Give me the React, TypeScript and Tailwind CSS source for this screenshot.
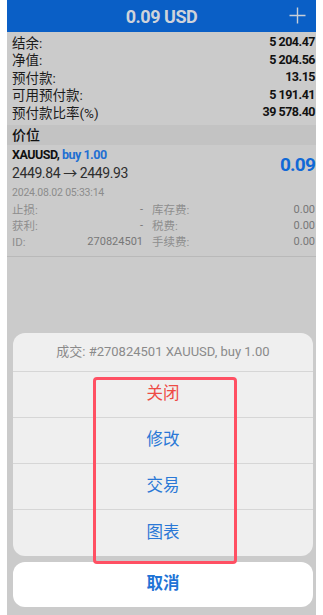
import React from 'react';

const cjk = { fontFamily: 'Roboto, "Noto Sans CJK SC", sans-serif' };

const balances = [
    ['结余:', '5 204.47'],
    ['净值:', '5 204.56'],
    ['预付款:', '13.15'],
    ['可用预付款:', '5 191.41'],
    ['预付款比率(%)', '39 578.40'],
];

const details = [
    ['止损:', '-', '库存费:', '0.00'],
    ['获利:', '-', '税费:', '0.00'],
    ['ID:', '270824501', '手续费:', '0.00'],
];

const actions = [
    { label: '关闭', color: 'text-[#ee4b45]' },
    { label: '修改', color: 'text-[#2a78d6]' },
    { label: '交易', color: 'text-[#2a78d6]' },
    { label: '图表', color: 'text-[#2a78d6]' },
];

const App: React.FC = () => {
    return (
        <div className="w-[323px] h-[615px] bg-white flex" style={cjk}>
            <div className="ml-[7px] w-[309px] h-full bg-[#cbcbcb] relative overflow-hidden">
                {/* header */}
                <div className="h-[32px] bg-[#0a5fc6] flex items-center justify-center relative">
                    <span className="text-[18px] font-bold text-[#cfd3da] tracking-tight">0.09 USD</span>
                    <svg className="absolute right-[10px] top-[7px]" width="17" height="17" viewBox="0 0 17 17">
                        <path d="M8.5 0.5v16M0.5 8.5h16" stroke="#c9cfd8" strokeWidth="1.4" />
                    </svg>
                </div>

                {/* balances */}
                <div className="pt-[2px] pb-[3.5px] pl-[5px] pr-[1px]">
                    {balances.map(([k, v]) => (
                        <div key={k} className="h-[17.5px] flex items-center justify-between">
                            <span className="text-[13.5px] text-[#1c1c1c]">{k}</span>
                            <span className="text-[12.5px] font-bold text-[#111] tracking-[-0.5px]">{v}</span>
                        </div>
                    ))}
                </div>

                {/* section */}
                <div className="h-[20px] bg-[#c3c3c3] flex items-center pl-[5px]">
                    <span className="text-[14px] font-medium text-[#111]">价位</span>
                </div>

                {/* position */}
                <div className="pl-[5px] pr-[1px] border-b border-[#b9b9b9] pb-[5px]">
                    <div className="flex items-center justify-between pt-[2px]">
                        <div>
                            <div className="h-[17px] flex items-center text-[12.5px] font-bold text-[#111] tracking-[-0.5px]">
                                XAUUSD,&nbsp;<span className="text-[#1f6fd2]">buy 1.00</span>
                            </div>
                            <div className="h-[19px] flex items-center text-[14px] text-[#2e2e2e] tracking-[-0.4px]">2449.84 → 2449.93</div>
                        </div>
                        <span className="text-[19px] font-bold text-[#1169d6] tracking-[-0.8px]">0.09</span>
                    </div>
                    <div className="h-[19px] flex items-center text-[10.5px] text-[#8c8c8c] tracking-[-0.2px]">2024.08.02 05:33:14</div>
                    <div className="pt-[1px]">
                        {details.map(([a, b, c, d]) => (
                            <div key={a} className="h-[16px] flex items-center text-[11.5px] text-[#8e8e8e]">
                                <span className="w-[131px] flex justify-between">
                                    <span>{a}</span>
                                    <span className="text-[#777] text-[11px]">{b}</span>
                                </span>
                                <span className="ml-[9px] flex-1 flex justify-between">
                                    <span>{c}</span>
                                    <span className="text-[#777] text-[11px]">{d}</span>
                                </span>
                            </div>
                        ))}
                    </div>
                </div>

                {/* action sheet */}
                <div className="absolute left-[6px] top-[333px] w-[300px]">
                    <div className="bg-[#efefef] rounded-[12px] overflow-hidden">
                        <div className="h-[39px] flex items-center justify-center text-[13px] text-[#8a8a8a] border-b border-[#d6d6d6]">
                            成交: #270824501 XAUUSD, buy 1.00
                        </div>
                        {actions.map((a, i) => (
                            <div
                                key={a.label}
                                className={`h-[46px] flex items-center justify-center text-[16.5px] ${a.color} ${i < actions.length - 1 ? 'border-b border-[#d6d6d6]' : ''}`}
                            >
                                {a.label}
                            </div>
                        ))}
                    </div>
                    <div className="mt-[6px] h-[45px] bg-white rounded-[12px] flex items-center justify-center text-[16.5px] font-bold text-[#1f74d6]">
                        取消
                    </div>
                </div>

                {/* highlight */}
                <div className="absolute left-[86px] top-[377px] w-[144px] h-[187px] border-[3px] border-[#ff5063] rounded-[4px]" />
            </div>
        </div>
    );
};

export default App;
